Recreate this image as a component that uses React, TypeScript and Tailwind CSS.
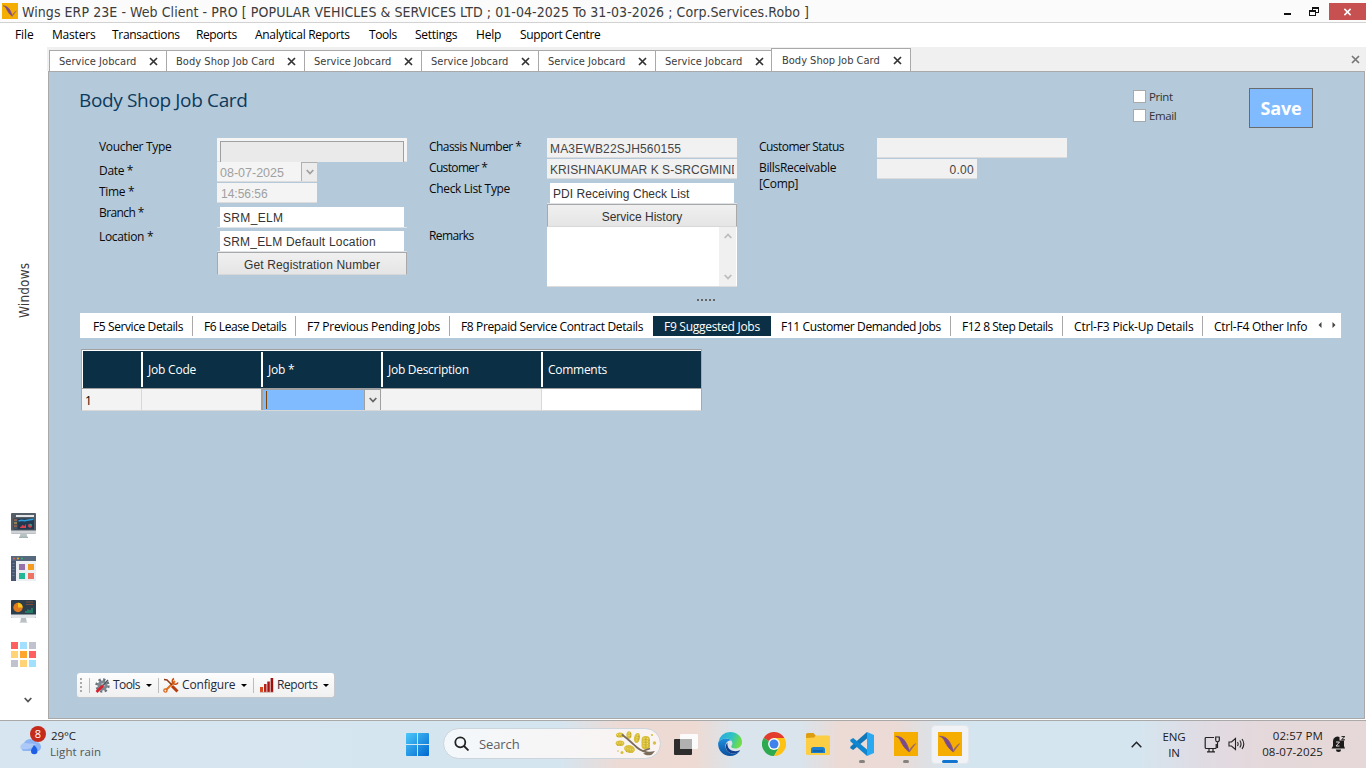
import React from 'react';

const SEGOE = "font-['Open_Sans','Noto_Sans',sans-serif]";
const TAHOMA = "font-['DejaVu_Sans_Condensed','DejaVu_Sans',sans-serif] [font-stretch:condensed]";
const ARIAL = "font-['Liberation_Sans',Arial,sans-serif]";

function WingsLogo({ className }: { className: string }) {
  return (
    <svg viewBox="0 0 24 24" preserveAspectRatio="none" className={className}>
      <rect width="24" height="24" fill="#f5ae00" />
      <path d="M1.500 4.200 C5.500 4 9 6 11 9 C13 12 14.800 16 15.500 20 C12.500 18.500 8.500 13.500 6.800 9.500 C5.600 6.500 4 5 1.500 4.200Z" fill="#7b4a8c" stroke="#7b4a8c" strokeWidth=".6" />
      <path d="M15 19.500 C16.300 16 18.500 13.500 21.800 11.500 C19.500 14.500 17.500 17 15.600 19.800Z" fill="#9a6a66" stroke="#8d5c78" strokeWidth=".5" />
    </svg>
  );
}

function Cross({ className }: { className: string }) {
  return (
    <svg viewBox="0 0 9 9" className={className} fill="none" stroke="currentColor" strokeWidth="1.7">
      <path d="M1 1l7 7M8 1L1 8" />
    </svg>
  );
}

function TitleBar() {
  return (
    <header className="flex h-[23px] shrink-0 items-start border-b border-[#d2d2d2] bg-[#fbfbfb] pl-[2px]">
      <WingsLogo className="mt-[3px] h-4 w-4" />
      <h1 className={`${TAHOMA} ml-1 mt-[2px] text-[14px] leading-5 whitespace-nowrap text-[#3c3c3c] tracking-[0.065px]`}>
        Wings ERP 23E - Web Client - PRO [ POPULAR VEHICLES &amp; SERVICES LTD ; 01-04-2025 To 31-03-2026 ; Corp.Services.Robo ]
      </h1>
      <div className="ml-auto flex">
        <svg className="mt-[13px] h-[2px] w-[7px]" viewBox="0 0 7 2"><rect width="7" height="2" fill="#111" /></svg>
        <svg className="mt-[7px] ml-[18px] h-[9px] w-[10px]" viewBox="0 0 10 9">
          <path d="M3 0h7v6H7V5h2V2H4v1H3z" fill="#111" />
          <path d="M0 3h7v6H0zM1 5v3h5V5z" fill="#111" fillRule="evenodd" />
        </svg>
        <div className="mt-[3px] ml-[10px] flex h-[17px] w-[37px] items-center justify-center bg-[#c75050] text-white">
          <Cross className="h-[8px] w-[9px]" />
        </div>
      </div>
    </header>
  );
}

const menus = [
  { t: 'File', c: 'w-[37px] tracking-[-0.1px]' },
  { t: 'Masters', c: 'w-[60px] tracking-[-0.2px]' },
  { t: 'Transactions', c: 'w-[84px] tracking-[-0.3px]' },
  { t: 'Reports', c: 'w-[59px] tracking-[-0.4px]' },
  { t: 'Analytical Reports', c: 'w-[114px] tracking-[-0.3px]' },
  { t: 'Tools', c: 'w-[46px] tracking-[-0.4px]' },
  { t: 'Settings', c: 'w-[61px] tracking-[-0.3px]' },
  { t: 'Help', c: 'w-[44px] tracking-[-0.2px]' },
  { t: 'Support Centre', c: 'w-[90px] tracking-[-0.38px]' },
];

function MenuBar() {
  return (
    <nav className={`${SEGOE} flex h-6 shrink-0 items-center bg-white pl-[15px] text-xs text-black`}>
      {menus.map((m) => (
        <span key={m.t} className={`${m.c} shrink-0 whitespace-nowrap`}>{m.t}</span>
      ))}
    </nav>
  );
}

const docTabs = [
  { t: 'Service Jobcard', w: 'w-[118px] border-r pr-[8px]' },
  { t: 'Body Shop Job Card', w: 'w-[138px] border-r pr-[8px]' },
  { t: 'Service Jobcard', w: 'w-[117px] border-r pr-[8px]' },
  { t: 'Service Jobcard', w: 'w-[117px] border-r pr-[8px]' },
  { t: 'Service Jobcard', w: 'w-[117px] border-r pr-[8px]' },
  { t: 'Service Jobcard', w: 'w-[115px] pr-[7px]' },
];

function DocumentTabs() {
  return (
    <div className={`${TAHOMA} flex h-6 shrink-0 items-end bg-[#f0f0f0] pl-[2px] text-[11px] text-[#3c3c3c]`}>
      {docTabs.map((t, i) => (
        <div key={i} className={`${t.w} flex h-[21px] items-center justify-between border-t border-[#a9a9a9] bg-white pl-[9px] first:border-l first:pl-[9px]`}>
          <span className="pt-[2px] whitespace-nowrap tracking-[0.05px]">{t.t}</span>
          <Cross className="h-[9px] w-[9px] text-[#333]" />
        </div>
      ))}
      <div className="flex h-[23px] w-[140px] items-center justify-between border-t border-r border-l border-[#a9a9a9] bg-white pr-[8px] pl-[10px]">
        <span className="pt-[2px] whitespace-nowrap">Body Shop Job Card</span>
        <Cross className="mt-px h-[9px] w-[9px] text-[#333]" />
      </div>
      <Cross className="mr-[6px] mb-[7px] ml-auto h-[9px] w-[9px] text-[#777]" />
    </div>
  );
}

function Row({ label, h, track = 'tracking-[-0.33px]', children }: { label?: React.ReactNode; h: string; track?: string; children: React.ReactNode }) {
  return (
    <div className={`${h} flex items-start`}>
      <div className={`${track} w-[118px] shrink-0 pt-px text-xs leading-4 whitespace-nowrap text-[#0a0a0a]`}>{label}</div>
      {children}
    </div>
  );
}

function Combo({ children, track }: { children: React.ReactNode; track: string }) {
  return (
    <div className="h-6 w-[190px] border-b border-[#dde3e8] px-[3px] pt-[3px]">
      <div className={`${ARIAL} ${track} h-5 bg-white pl-[3px] text-[12px] leading-[22px] whitespace-nowrap text-[#333]`}>{children}</div>
    </div>
  );
}

function PushButton({ children, track }: { children: React.ReactNode; track: string }) {
  return (
    <button className={`${ARIAL} ${track} flex h-[23px] w-[190px] items-start justify-center border border-b-[#d8d8d8] border-[#a9a9a9] bg-linear-to-b from-[#f0f0f0] to-[#e5e5e5] text-[12px] leading-[24px] text-[#333]`}>
      {children}
    </button>
  );
}

function Chevron({ className, d }: { className: string; d: string }) {
  return (
    <svg viewBox="0 0 8 6" className={className} fill="none" stroke="currentColor" strokeWidth="1.8">
      <path d={d} />
    </svg>
  );
}

const DOWN = 'M.7 1L4 4.500L7.300 1';
const UP = 'M.7 5L4 1.500L7.300 5';
const field = `${ARIAL} h-5 border-b border-[#dcdcdc] bg-[#f1f1f1] text-[12px] leading-[22px] whitespace-nowrap overflow-hidden text-[#444]`;

function VoucherForm() {
  return (
    <section className="flex pl-[50px] pt-[21px]">
      <div className="w-[330px]">
        <Row label="Voucher Type" h="h-6">
          <div className="h-6 w-[190px] border-b border-[#e2e2e2] bg-[#f5f5f5] px-[3px] pt-[3px]">
            <div className="h-[21px] border border-b-0 border-[#a0a0a0] bg-[#eaeaea]" />
          </div>
        </Row>
        <Row label="Date *" h="h-[21px]">
          <div className={`${ARIAL} flex h-5 w-[100px] border-b border-[#dcdcdc] bg-[#f4f4f4] pl-[3px] text-[12.5px] leading-[22px] text-[#a0a0a0]`}>
            08-07-2025
            <div className="ml-auto flex h-[19px] w-4 items-center justify-center border-t border-l border-[#b0b0b0] bg-[#ececec]">
              <Chevron d={DOWN} className="h-[6px] w-[8px]" />
            </div>
          </div>
        </Row>
        <Row label="Time *" h="h-[21px]">
          <div className={`${ARIAL} h-5 w-[100px] border-b border-[#dcdcdc] bg-[#f4f4f4] pl-[4px] text-[12px] leading-[22px] text-[#a0a0a0]`}>14:56:56</div>
        </Row>
        <Row label="Branch *" h="h-6" track="tracking-[-0.6px]"><Combo track="tracking-[0.35px]">SRM_ELM</Combo></Row>
        <Row label="Location *" h="h-6"><Combo track="tracking-[0.2px]">SRM_ELM Default Location</Combo></Row>
        <Row h="h-6"><PushButton track="tracking-[0.15px]">Get Registration Number</PushButton></Row>
      </div>
      <div className="w-[330px]">
        <Row label="Chassis Number *" h="h-[21px]" track="tracking-[-0.55px]"><div className={`${field} w-[190px] pl-[3px] tracking-[0.18px]`}>MA3EWB22SJH560155</div></Row>
        <Row label="Customer *" h="h-[21px]" track="tracking-[-0.65px]">
          <div className={`${field} w-[190px] px-[3px]`}><div className="overflow-hidden tracking-[0.05px]">KRISHNAKUMAR K S-SRCGMIND</div></div>
        </Row>
        <Row label="Check List Type" h="h-6"><Combo track="tracking-[0.04px]">PDI Receiving Check List</Combo></Row>
        <Row h="h-[23px]"><PushButton track="tracking-[0px]">Service History</PushButton></Row>
        <Row label="Remarks" h="h-[60px]" track="tracking-[-0.6px]">
          <div className="flex h-[60px] w-[190px] justify-end border-b border-[#dcdcdc] bg-white pr-px">
            <div className="flex w-[17px] flex-col items-center justify-between bg-[#f0f0f0] py-[6px] text-[#bdbdbd]">
              <Chevron d={UP} className="h-[6px] w-[8px]" />
              <Chevron d={DOWN} className="h-[6px] w-[8px]" />
            </div>
          </div>
        </Row>
      </div>
      <div className="w-[330px]">
        <Row label="Customer Status" h="h-[21px]" track="tracking-[-0.53px]"><div className={`${field} w-[190px]`} /></Row>
        <Row label={<>BillsReceivable<br />[Comp]</>} h="h-[40px]">
          <div className={`${field} w-[100px] pr-[3px] text-right tracking-[0.3px]`}>0.00</div>
        </Row>
      </div>
    </section>
  );
}

const detailTabs = [
  { t: 'F5 Service Details', c: 'w-[113px] pl-[13px] border-r tracking-[-0.4px]' },
  { t: 'F6 Lease Details', c: 'w-[103px] pl-[11px] border-r tracking-[-0.45px]' },
  { t: 'F7 Previous Pending Jobs', c: 'w-[154px] pl-[11px] border-r tracking-[-0.28px]' },
  { t: 'F8 Prepaid Service Contract Details', c: 'w-[203px] pl-[11px] tracking-[-0.36px]' },
  { t: 'F9 Suggested Jobs', c: 'w-[118px] pl-[11px] bg-[#0b2f44] text-white tracking-[-0.28px]' },
  { t: 'F11 Customer Demanded Jobs', c: 'w-[180px] pl-[10px] border-r tracking-[-0.38px]' },
  { t: 'F12 8 Step Details', c: 'w-[112px] pl-[11px] border-r tracking-[-0.47px]' },
  { t: 'Ctrl-F3 Pick-Up Details', c: 'w-[140px] pl-[11px] border-r tracking-[-0.17px]' },
  { t: 'Ctrl-F4 Other Info', c: 'w-[112px] pl-[11px] tracking-[-0.24px]' },
];

function DetailTabs() {
  return (
    <div className="ml-[31px] flex h-[25px] w-[1261px] items-center bg-white text-xs text-black">
      {detailTabs.map((t) => (
        <div key={t.t} className={`${t.c} h-5 shrink-0 border-[#a9a9a9] leading-[22px] whitespace-nowrap`}>{t.t}</div>
      ))}
      <svg viewBox="0 0 18 6" className="mb-px ml-[3px] h-[6px] w-[18px] shrink-0" fill="#444"><path d="M3.500 0v6L.5 3zM14.500 0v6l3-3z" /></svg>
    </div>
  );
}

const head = 'h-[35px] border-l-2 border-white pl-[5px] leading-[35px]';

function JobsGrid() {
  return (
    <div className="mt-[11px] ml-[32px] w-[621px] border border-t-[#a0a0a0] border-r-[#a9a9a9] border-b-[#d8d8d8] border-l-[#a9a9a9] text-xs">
      <div className="grid h-[38px] grid-cols-[58px_120px_120px_160px_161px] items-center border-t border-l border-white bg-[#0b2f44] tracking-[-0.2px] text-white">
        <span />
        <span className={head}>Job Code</span>
        <span className={head}>Job *</span>
        <span className={`${head} tracking-[-0.28px]`}>Job Description</span>
        <span className={`${head} tracking-[-0.28px]`}>Comments</span>
      </div>
      <div className="grid h-[22px] grid-cols-[60px_119px_120px_160px_160px] grid-rows-[21px] border-t border-[#a0a0a0] bg-[#f3f3f3] leading-[23px]">
        <span className="border-r border-[#d8d8d8] pl-[3px]">1</span>
        <span />
        <span className="flex border-t border-r border-l-2 border-[#a0a0a0] bg-[#80bbff]">
          <span className="my-px ml-[3px] w-px bg-[#7f4400]" />
          <span className="ml-auto flex w-4 items-center justify-center border-l border-[#a0a0a0] bg-[#ececec] text-[#666]">
            <Chevron d={DOWN} className="h-[6px] w-[8px]" />
          </span>
        </span>
        <span />
        <span className="border-l border-[#d8d8d8] bg-white" />
      </div>
    </div>
  );
}

function ToolsIcon() {
  return (
    <svg viewBox="0 0 15 15" className="h-[15px] w-[15px]">
      <circle cx="7.500" cy="7.500" r="5" fill="#7d8790" />
      <circle cx="7.500" cy="7.500" r="6" fill="none" stroke="#69737d" strokeWidth="2.400" strokeDasharray="2.300 2.400" />
      <circle cx="8" cy="7" r="2" fill="#b9c1c8" />
      <path d="M1.500 14L8 7.500" stroke="#d8202c" strokeWidth="2.600" />
      <path d="M8 7.500L13 2" stroke="#4d5862" strokeWidth="1.300" />
    </svg>
  );
}

function ConfigureIcon() {
  return (
    <svg viewBox="0 0 16 16" className="h-4 w-4" fill="none">
      <path d="M3 13L12 4" stroke="#e2711d" strokeWidth="2.200" />
      <circle cx="2.400" cy="13.500" r="1.600" stroke="#d9661a" strokeWidth="1.300" />
      <path d="M11 1.500a3 3 0 1 0 4 4" stroke="#c65014" strokeWidth="1.600" />
      <path d="M1 2.500l3 .5 5 5" stroke="#8f3a16" strokeWidth="1.500" />
      <path d="M9 9l5.500 5.500" stroke="#b53c10" strokeWidth="3" />
    </svg>
  );
}

function ReportsIcon() {
  return (
    <svg viewBox="0 0 14 15" className="h-[15px] w-[14px]">
      <path d="M0 9h3v5H0z" fill="#d8471d" /><path d="M4 6h2.500v8H4z" fill="#b5231a" />
      <path d="M7.300 3.500h2.500V14H7.300z" fill="#a5140f" /><path d="M10.600 0h2.600v14h-2.600z" fill="#9c0f0c" />
      <path d="M0 14.300h13.500" stroke="#c9a19c" strokeWidth=".8" />
    </svg>
  );
}

function ActionBar() {
  const sep = <span className="h-[15px] w-px bg-[#bdbdbd]" />;
  const tri = <svg viewBox="0 0 6 3" className="h-[3px] w-[6px]"><path d="M0 0h6L3 3z" fill="#000" /></svg>;
  return (
    <div className="mt-auto mb-[20px] ml-[28px] flex h-[25px] w-[258px] items-center rounded-[3px] border-r border-b border-[#c4c8cc] bg-linear-to-b from-[#fdfdfd] to-[#f0f0f0] pl-[3px] text-xs tracking-[-0.1px] text-[#1e2a3a]">
      <svg viewBox="0 0 2 14" className="h-[14px] w-[2px] shrink-0"><path d="M1 0v14" stroke="#aaa" strokeWidth="2" strokeDasharray="2 2" /></svg>
      <div className="ml-[7px] flex items-center">{sep}<span className="ml-[5px]"><ToolsIcon /></span><span className="ml-[3px] w-[33px] tracking-[-0.6px]">Tools</span>{tri}</div>
      <div className="ml-[6px] flex items-center">{sep}<span className="ml-[4px]"><ConfigureIcon /></span><span className="ml-[3px] w-[59px] tracking-[-0.15px]">Configure</span>{tri}</div>
      <div className="ml-[6px] flex items-center">{sep}<span className="ml-[6px]"><ReportsIcon /></span><span className="ml-[3px] w-[46px] tracking-[-0.45px]">Reports</span>{tri}</div>
    </div>
  );
}

function SideBar() {
  return (
    <aside className="-mt-6 flex w-[47px] shrink-0 flex-col items-center bg-white">
      <div className={`${TAHOMA} mt-[213px] h-[60px] rotate-180 text-center text-[13.5px] leading-5 tracking-[0.15px] text-[#3c3c3c] [writing-mode:vertical-rl]`}>Windows</div>
      <svg viewBox="0 0 25 25" className="mt-[193px] h-[25px] w-[25px] shrink-0">
        <rect width="25" height="20.500" rx="1" fill="#555d66" /><rect y="17.500" width="25" height="3" fill="#cfd3d6" />
        <rect x="5" y="2" width="18" height="2" fill="#e3e6e8" /><rect x="2.500" y="5.500" width="20.500" height="11" fill="#22394f" />
        <path d="M2.500 6h4v10h-4z" fill="#45525f" /><path d="M3 7h3M3 13h3" stroke="#d96b3b" /><path d="M3 10h3" stroke="#d9b04c" />
        <path d="M7.500 8l3-.8 3 .6 4-.9 5-.6" stroke="#2d9cdb" strokeWidth="1.500" fill="none" />
        <path d="M9 14.500l2.500-2.500 2 1 1.500-2v4H9z" fill="#d9414e" /><circle cx="19" cy="12.800" r="2" fill="#d9414e" />
        <path d="M19 12.800v-2a2 2 0 0 1 2 2z" fill="#33a08d" /><path d="M9.500 20.500h6l.7 3.500H8.700z" fill="#b8c2c4" /><path d="M8 24.300h9" stroke="#90a0a2" />
      </svg>
      <svg viewBox="0 0 25 25" className="mt-[18px] h-[25px] w-[25px] shrink-0">
        <rect width="25" height="25" fill="#edf0f2" /><rect width="25" height="5" fill="#57697d" /><rect y="5" width="5" height="20" fill="#46566e" />
        <circle cx="3" cy="2.500" r="1" fill="#e8604c" /><circle cx="7" cy="2.500" r="1" fill="#f0b429" /><circle cx="11" cy="2.500" r="1" fill="#2db67c" />
        <path d="M1.500 7.500h2M1.500 10.500h2M1.500 13.500h2M1.500 16.500h2M1.500 19.500h2" stroke="#6b7d96" />
        <rect x="8" y="8" width="6" height="6" fill="#9672a8" /><rect x="17" y="8" width="6" height="6" fill="#f39c1f" />
        <rect x="8" y="17" width="6" height="6" fill="#25b795" /><rect x="17" y="17" width="6" height="6" fill="#ee7262" />
      </svg>
      <svg viewBox="0 0 25 23" className="mt-[19px] h-[23px] w-[25px] shrink-0">
        <rect width="25" height="18" rx="1" fill="#2c3e4c" /><path d="M0 14.500h25V17a1 1 0 0 1-1 1H1a1 1 0 0 1-1-1z" fill="#e3e6e8" />
        <circle cx="7" cy="7.500" r="4.700" fill="#e07a1c" /><path d="M7 7.500V2.800a4.700 4.700 0 0 1 4.700 4.700z" fill="#f9c51c" />
        <path d="M15 2h7M15 4.500h7" stroke="#7d4a38" /><path d="M15 13v-2M17 13V9.500M19 13v-3M21 13V8" stroke="#1e9a72" strokeWidth="1.300" />
        <path d="M10 18h5l.7 4H9.300z" fill="#b9bfc3" /><path d="M8.500 22.500h8" stroke="#d5d9dc" />
      </svg>
      <svg viewBox="0 0 25 25" className="mt-[19px] h-[25px] w-[25px] shrink-0">
        <path d="M0 0h7v7H0zM9 9h0M18 9h7v7h-7z" fill="#ff5f5f" /><path d="M9 0h7v7H9zM18 18h7v7h-7z" fill="#a3e0ff" />
        <path d="M18 0h7v7h-7zM0 18h7v7H0z" fill="#c0c3cd" /><path d="M0 9h7v7H0zM9 18h7v7H9z" fill="#ffd376" /><path d="M9 9h7v7H9z" fill="#ffa62e" />
      </svg>
      <Chevron d={DOWN} className="mt-[30px] ml-[8px] h-[6px] w-[8px] shrink-0 text-[#555]" />
    </aside>
  );
}

function Mimosa() {
  return (
    <svg viewBox="0 0 42 26" className="mr-[3px] ml-auto h-[26px] w-[42px]">
      <g fill="#d9c03c">
        <ellipse cx="5" cy="4" rx="4" ry="2.600" /><ellipse cx="5" cy="12.300" rx="4.300" ry="2.800" /><ellipse cx="14" cy="4" rx="2.600" ry="3.800" />
        <ellipse cx="22" cy="7" rx="3" ry="5" transform="rotate(12 22 7)" /><ellipse cx="14.500" cy="18" rx="5.500" ry="3.800" transform="rotate(12 14.500 18)" />
        <rect x="26.500" y="5" width="8.500" height="13.500" rx="4" /><circle cx="37" cy="4" r="1.100" /><circle cx="39.500" cy="12" r="1.700" /><circle cx="7" cy="21.500" r="1.500" /><circle cx="3" cy="20" r=".8" />
      </g>
      <g fill="none" stroke="#f0e07a" strokeWidth="1" strokeDasharray="1 1.500">
        <path d="M2 3.500h6M2 12h6M14 1.500v5M22.500 3.500L21.500 10M10 17l9 2M29 7v10M32.500 7v10" />
      </g>
      <g fill="none" stroke="#b49a2a" strokeWidth=".9" strokeDasharray="1 1.800">
        <path d="M2 5.500h6M2 14h6M15.500 2v5M24 5l-1 6M11 20.500l7 1M30.700 8v9M34 9v7" />
      </g>
      <path d="M7 3.500C13 8 17 12 22 16.500c4 3.500 9 5 14 5.500M28 20l7-2.500" stroke="#7a6c5b" strokeWidth="1.800" fill="none" />
      <path d="M28 22.500c3 2 6 2.500 9 1l3-3.500-6 1z" fill="#7a6c5b" />
    </svg>
  );
}

function TaskBar() {
  return (
    <footer
      className={`${SEGOE} relative flex h-[47px] shrink-0 items-start bg-[linear-gradient(90deg,#d6e5f0_0px,#d5e5f0_560px,#eddad4_620px,#eedad3_695px,#dae4ec_735px,#d9e4ec_800px,#ecdad5_840px,#ebdad5_895px,#d5e5ef_950px,#d5e5ef_1140px,#e0dbe3_1205px,#e5d8da_1270px,#e6d8d8_1366px)] text-[#1b1b1b]`}
    >
      <div className="flex w-[406px] shrink-0 pl-[18px]">
        <div className="relative mt-[5px] h-[31px] w-[28px]">
          <svg viewBox="0 0 26 20" className="mt-[9px] h-[20px] w-[26px]">
            <path d="M5 16a5 5 0 0 1 1-8 7 7 0 0 1 12-1 5 5 0 0 1 3 9z" fill="#8db5f4" />
            <path d="M3 14a4 4 0 0 1 3-6l12 1c-4 5-10 6-15 5z" fill="#adc9f8" />
            <path d="M16 10c3 3 3.500 4.500 3.500 6a3.200 3.200 0 0 1-6.500 0c0-2 2-4 3-6z" fill="#1e5fe6" />
          </svg>
          <span className="absolute top-0 left-[12px] flex h-4 w-4 items-center justify-center rounded-full bg-[#c42b1c] text-[11px] leading-4 text-white">8</span>
        </div>
        <div className="mt-[7px] ml-[4px] text-[11.500px] leading-4">
          <div className="pl-px tracking-[-0.1px]">29°C</div>
          <div className="tracking-[0.08px] text-[#555]">Light rain</div>
        </div>
      </div>
      <svg viewBox="0 0 24 24" className="mt-[12px] h-[23px] w-[23px] shrink-0">
        <defs><linearGradient id="win" x1="0" y1="0" x2="1" y2="1"><stop offset="0" stopColor="#4cc8fa" /><stop offset="1" stopColor="#0067d0" /></linearGradient></defs>
        <path d="M1 0h10.500v11.500H0V1a1 1 0 0 1 1-1zM12.500 0H23a1 1 0 0 1 1 1v10.500H12.500zM0 12.500h11.500V24H1a1 1 0 0 1-1-1zM12.500 12.500H24V23a1 1 0 0 1-1 1H12.500z" fill="url(#win)" />
      </svg>
      <div className="mt-[7px] ml-[14px] flex h-[31px] w-[218px] shrink-0 items-center rounded-full border border-[#cdd5dc] bg-linear-to-r from-[#f3f8fb] to-[#faf3f1] pl-[10px]">
        <svg viewBox="0 0 15 15" className="h-[15px] w-[15px]" fill="none" stroke="#222" strokeWidth="1.800"><circle cx="6.300" cy="6.300" r="5" /><path d="M10 10l4.500 4.500" /></svg>
        <span className="ml-[10px] pt-[2px] text-[13px] tracking-[-0.1px] text-[#5b5f63]">Search</span>
        <Mimosa />
      </div>
      <svg viewBox="0 0 24 24" className="mt-[12px] ml-[13px] h-6 w-6 shrink-0"><rect y="6" width="18" height="16" rx="1" fill="#2d2d2d" /><rect x="6" y="1" width="18" height="15" rx="1" fill="#fbfbfb" /><rect x="6" y="6" width="12" height="10" fill="#b1b1b1" /></svg>
      <svg viewBox="0 0 24 24" className="mt-[11px] ml-[20px] h-6 w-6 shrink-0">
        <defs>
          <linearGradient id="e1" x1="0" y1="0" x2="1" y2=".3"><stop offset="0" stopColor="#2aa5e5" /><stop offset=".6" stopColor="#2fc3c4" /><stop offset="1" stopColor="#6edb4a" /></linearGradient>
          <linearGradient id="e2" x1="0" y1="0" x2="0" y2="1"><stop offset="0" stopColor="#1e8fdd" /><stop offset="1" stopColor="#0b4f9e" /></linearGradient>
        </defs>
        <path d="M.3 10.500A11.800 11.800 0 0 1 12 0c7 0 12 4.500 12 10 0 4-3 6.500-6.500 6.500-3 0-4.300-1-4.300-2 0-.8 1.200-1.300 1.200-3C14.400 9 12 6.500 8.500 6.500 4.500 6.500 1.300 8.500.3 10.500z" fill="url(#e1)" />
        <path d="M.2 11C1 8.500 4.500 6.500 8.500 6.500c2 0 3.500.8 4.600 2-3-.5-5.600 2-5.600 5.500 0 4.500 4 8 8.500 7.500 2.500-.2 4.500-1.200 5.600-2.300C19.500 22.300 16 24 12 24 5 24-.5 18 .2 11z" fill="url(#e2)" />
        <path d="M9.500 10.500C8 12 7.500 14 8 16c1 4 5 6 8.500 5.500 2.500-.3 4.300-1.300 5.300-2.500.3-.5-.2-.8-.6-.6-2 .9-4.500 1-6.800.3-3.500-1-5.500-4.200-4.900-8.200z" fill="#123f8c" />
      </svg>
      <svg viewBox="0 0 24 24" className="mt-[11px] ml-[20px] h-6 w-6 shrink-0">
        <path d="M12 12L1.600 6A12 12 0 0 1 22.400 6z" fill="#e33b2e" /><path d="M12 12L1.600 6A12 12 0 0 0 12 24l5.200-9z" fill="#2da94f" /><path d="M12 6h10.400A12 12 0 0 1 12 24l5.200-9z" fill="#fdc214" />
        <circle cx="12" cy="12" r="5.900" fill="#fff" /><circle cx="12" cy="12" r="4.500" fill="#4081ec" />
      </svg>
      <svg viewBox="0 0 24 22" className="mt-[12px] ml-[20px] h-[22px] w-6 shrink-0">
        <path d="M0 1.500A1.500 1.500 0 0 1 1.500 0h6L10 3v6H0z" fill="#dd9d10" /><path d="M0 5l8-.5L10 2.500h12.500A1.500 1.500 0 0 1 24 4v16.500a1.500 1.500 0 0 1-1.500 1.500h-21A1.500 1.500 0 0 1 0 20.500z" fill="#fbce45" />
        <path d="M5 20v-3.500A2.500 2.500 0 0 1 7.500 14h9a2.500 2.500 0 0 1 2.500 2.500V20z" fill="#1b7fd0" /><path d="M7 18h10" stroke="#0f5ca5" strokeWidth="1.500" />
      </svg>
      <div className="mt-[11px] ml-[20px] flex shrink-0 flex-col items-center">
        <svg viewBox="0 0 24 24" className="h-6 w-6"><path d="M17 0v6.500L3.200 18 0.300 16.200V14.800z" fill="#1177bb" /><path d="M17 24v-6.500L3.200 6 .3 7.800v1.400z" fill="#0f86d0" /><path d="M17 0l7 3v18l-7 3z" fill="#29a9f1" /></svg>
        <span className="mt-[4px] h-[3px] w-[6px] rounded-full bg-[#85827f]" />
      </div>
      <div className="mt-[11px] ml-[20px] flex shrink-0 flex-col items-center"><WingsLogo className="h-6 w-6" /><span className="mt-[4px] h-[3px] w-[6px] rounded-full bg-[#85827f]" /></div>
      <div className="mt-[4px] ml-[13px] flex h-[39px] w-[38px] shrink-0 flex-col items-center rounded-[4px] border border-[#e3e7ea] bg-[#f0f2f5] pt-[6px]"><WingsLogo className="h-6 w-6" /><span className="mt-[4px] h-[3px] w-4 shrink-0 rounded-full bg-[#1175d0]" /></div>
      <div className="ml-auto flex shrink-0 text-[12px] leading-4">
        <svg viewBox="0 0 11 7" className="mt-[20px] h-[7px] w-[11px]" fill="none" stroke="#222" strokeWidth="1.500"><path d="M.7 6.300L5.500 1.300l4.800 5" /></svg>
        <div className="mt-[8px] ml-[17px] w-[30px] text-center text-[11.500px] tracking-[-0.1px]">ENG<br />IN</div>
        <svg viewBox="0 0 17 18" className="mt-[15px] ml-[15px] h-[18px] w-[17px]" fill="none" stroke="#222" strokeWidth="1.200"><path d="M10 1.500H2.200a1 1 0 0 0-1 1v9a1 1 0 0 0 1 1h9a1 1 0 0 0 1-1V8M5 12.500v3M9 12.500v3M3 15.900h8M11.700 1h3.600v3a1.800 1.800 0 0 1-3.600 0zM13.500 6v6" /></svg>
        <svg viewBox="0 0 17 14" className="mt-[16px] ml-[7px] h-[14px] w-[17px]" fill="none" stroke="#222" strokeWidth="1.100"><path d="M1 5v4h2.500L7.500 12.500v-11L3.500 5zM9.500 5q1.300 2 0 4M11.800 3.500q2.500 3.500 0 7M14 2q3.600 5 0 10" /></svg>
        <div className="mt-[7px] ml-[12px] w-[66px] text-right text-[11.500px] tracking-[0.08px] whitespace-nowrap">02:57 PM<br />08-07-2025</div>
        <svg viewBox="0 0 15 16" className="mt-[15px] mr-[20px] ml-[8px] h-4 w-[15px]" fill="#1b1b1b"><path d="M2 5a4.500 4.500 0 0 1 6.500-4v3.500H13V10l1 2.500H.5L2 10zM5 13.500h5a2.500 2.500 0 0 1-5 0z" /><path d="M5 6h3.500L5 10h3.500" stroke="#e6d8d8" fill="none" /><path d="M10.500.6h3.300l-3.300 3.200h3.500" stroke="#1b1b1b" fill="none" /></svg>
      </div>
    </footer>
  );
}

export default function App() {
  return (
    <div className={`${SEGOE} flex h-[768px] w-[1366px] flex-col overflow-hidden bg-white`}>
      <TitleBar />
      <MenuBar />
      <div className="flex h-[673px] shrink-0">
        <div className="flex w-[47px] shrink-0 pt-6"><SideBar /></div>
        <div className="flex w-[1319px] flex-col">
          <DocumentTabs />
          <main className="ml-px flex h-[648px] w-[1317px] flex-col border border-[#a9a9a9] bg-[#b4c9da]">
            <div className="flex h-[45px] items-start pl-[30px]">
              <h2 className="mt-[14px] text-[19px] leading-7 tracking-[-0.35px] text-[#0d3a5c]">Body Shop Job Card</h2>
              <div className="mt-[18px] ml-auto flex w-[41px] flex-col gap-[6px] text-[11.500px] leading-[13px] tracking-[-0.4px] text-[#333]">
                {['Print', 'Email'].map((t) => (
                  <label key={t} className="flex items-center gap-[3px]"><span className="h-[13px] w-[13px] shrink-0 border border-[#a9a9a9] bg-white" />{t}</label>
                ))}
              </div>
              <button className="mt-4 mr-[51px] ml-[75px] h-10 w-16 border border-[#6b6b6b] bg-[#80bbff] text-[18px] font-bold tracking-[-0.2px] text-white">Save</button>
            </div>
            <VoucherForm />
            <div className="flex h-[26px] items-center pb-px pl-[648px]">
              <svg viewBox="0 0 19 2" className="h-[2px] w-[19px]"><path d="M0 1h19" stroke="#666" strokeWidth="2" strokeDasharray="2 2" /></svg>
            </div>
            <DetailTabs />
            <JobsGrid />
            <ActionBar />
          </main>
        </div>
      </div>
      <div className="h-px shrink-0 bg-[#a9a9a9]" />
      <TaskBar />
    </div>
  );
}
